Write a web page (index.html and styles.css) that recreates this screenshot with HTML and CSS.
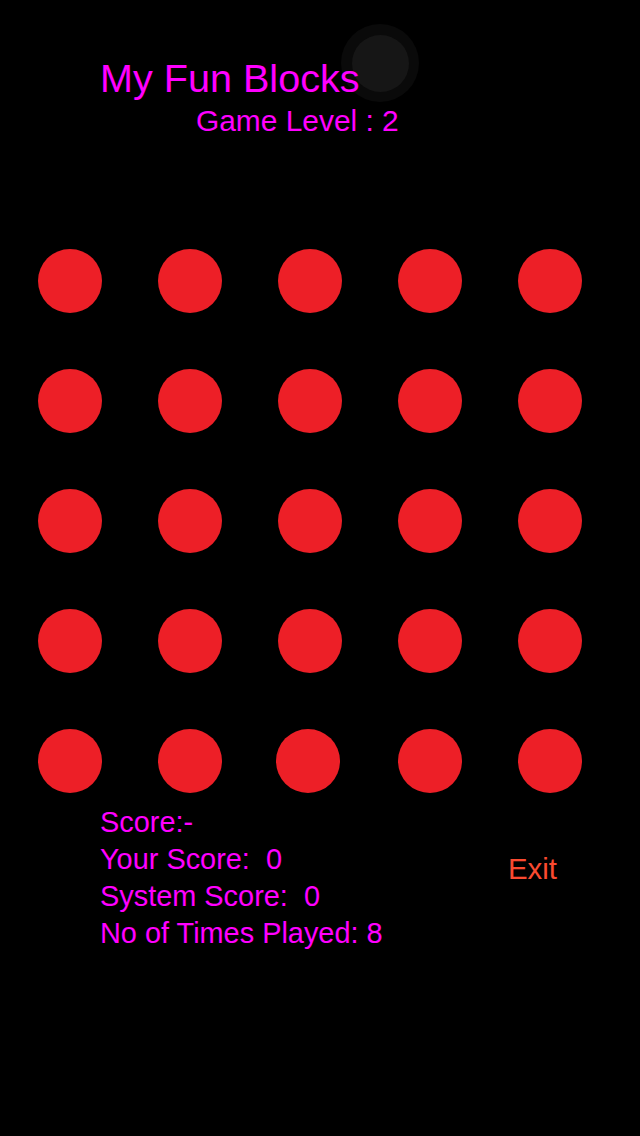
FILE: index.html
```html
<!DOCTYPE html>
<html>
<head>
<meta charset="utf-8">
<link rel="stylesheet" href="styles.css">
</head>
<body>
<div class="screen">
  <div class="touch"><div class="touch-inner"></div></div>
  <h1 class="title">My Fun Blocks</h1>
  <div class="level">Game Level : 2</div>
  <div class="grid">
    <div class="dot"></div><div class="dot"></div><div class="dot"></div><div class="dot"></div><div class="dot"></div>
    <div class="dot"></div><div class="dot"></div><div class="dot"></div><div class="dot"></div><div class="dot"></div>
    <div class="dot"></div><div class="dot"></div><div class="dot"></div><div class="dot"></div><div class="dot"></div>
    <div class="dot"></div><div class="dot"></div><div class="dot"></div><div class="dot"></div><div class="dot"></div>
    <div class="dot"></div><div class="dot"></div><div class="dot shift"></div><div class="dot"></div><div class="dot"></div>
  </div>
  <div class="bottom">
    <div class="scores">
      <div class="line">Score:-</div>
      <div class="line">Your Score:&nbsp; 0</div>
      <div class="line">System Score:&nbsp; 0</div>
      <div class="line">No of Times Played: 8</div>
    </div>
    <div class="exit">Exit</div>
  </div>
</div>
</body>
</html>
```
FILE: styles.css
```css
html, body {
  margin: 0;
  padding: 0;
  background: #000;
}
.screen {
  position: relative;
  width: 640px;
  height: 1136px;
  background: #000;
  font-family: "Liberation Sans", Arial, sans-serif;
  color: #ff00ff;
  overflow: hidden;
}
.touch {
  position: absolute;
  left: 341px;
  top: 24px;
  width: 78px;
  height: 78px;
  border-radius: 50%;
  background: #0a0a0a;
  display: flex;
  align-items: center;
  justify-content: center;
}
.touch-inner {
  width: 57px;
  height: 57px;
  border-radius: 50%;
  background: #161616;
}
.title {
  margin: 0;
  padding: 56px 0 0 100px;
  font-size: 39.6px;
  line-height: 44px;
  font-weight: normal;
  position: relative;
}
.level {
  margin-top: 4px;
  padding-left: 196px;
  font-size: 29.9px;
  line-height: 34px;
}
.grid {
  margin-top: 111px;
  padding-left: 38px;
  display: grid;
  grid-template-columns: repeat(5, 64px);
  column-gap: 56px;
  row-gap: 56px;
}
.dot {
  width: 64px;
  height: 64px;
  border-radius: 50%;
  background: #ed1f27;
}
.dot.shift {
  margin-left: -2px;
}
.bottom {
  display: flex;
  margin-top: 11px;
  padding-left: 100px;
  padding-right: 83px;
}
.scores {
  font-size: 28.9px;
  line-height: 37px;
}
.exit {
  margin-left: auto;
  margin-top: 46px;
  font-size: 29.4px;
  line-height: 37px;
  color: #fa4a30;
}
```
